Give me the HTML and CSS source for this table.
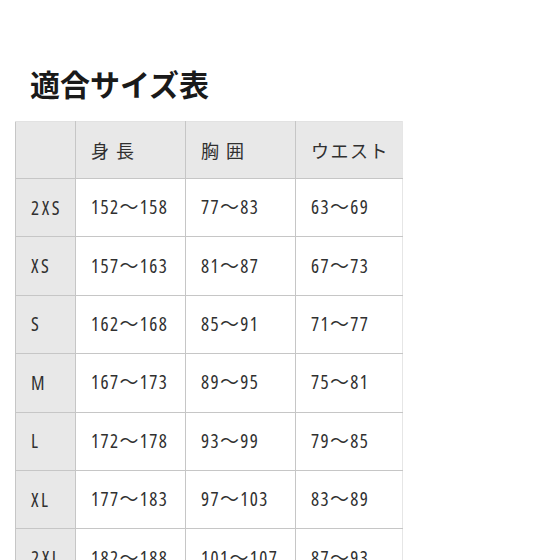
FILE: index.html
```
<!DOCTYPE html>
<html lang="ja">
<head>
<meta charset="utf-8">
<link rel="stylesheet" href="styles.css">
</head>
<body>
<div class="page">
  <h1 class="title">適合サイズ表</h1>
  <table class="size-table">
    <colgroup>
      <col class="c-size">
      <col class="c-val">
      <col class="c-val">
      <col class="c-last">
    </colgroup>
    <thead>
      <tr>
        <th class="corner"></th>
        <th class="head">身 長</th>
        <th class="head">胸 囲</th>
        <th class="head">ウエスト</th>
      </tr>
    </thead>
    <tbody>
      <tr><th class="size">2XS</th><td>152〜158</td><td>77〜83</td><td>63〜69</td></tr>
      <tr><th class="size">XS</th><td>157〜163</td><td>81〜87</td><td>67〜73</td></tr>
      <tr><th class="size">S</th><td>162〜168</td><td>85〜91</td><td>71〜77</td></tr>
      <tr><th class="size">M</th><td>167〜173</td><td>89〜95</td><td>75〜81</td></tr>
      <tr><th class="size">L</th><td>172〜178</td><td>93〜99</td><td>79〜85</td></tr>
      <tr><th class="size">XL</th><td>177〜183</td><td>97〜103</td><td>83〜89</td></tr>
      <tr><th class="size">2XL</th><td>182〜188</td><td>101〜107</td><td>87〜93</td></tr>
    </tbody>
  </table>
</div>
</body>
</html>
```
FILE: styles.css
```
html, body {
  margin: 0;
  padding: 0;
  background: #ffffff;
}
.page {
  width: 560px;
  height: 560px;
  overflow: hidden;
  padding-top: 66px;
  box-sizing: border-box;
}
.title {
  margin: 0 0 21px 30px;
  font-family: "Noto Sans CJK JP", sans-serif;
  font-weight: 700;
  font-size: 30px;
  line-height: 34px;
  color: #1a1a1a;
}
.size-table {
  margin-left: 15px;
  border-collapse: collapse;
  table-layout: fixed;
  width: 387px;
  border-top: 1px solid #e2e2e2;
  border-left: 1px solid #e2e2e2;
}
.c-size { width: 60px; }
.c-val { width: 110px; }
.c-last { width: 107px; }
.size-table th,
.size-table td {
  height: 58.4px;
  padding: 0 0 0 15px;
  text-align: left;
  vertical-align: middle;
  border: 1px solid #c6c6c6;
  color: #303030;
  font-weight: 400;
  box-sizing: border-box;
}
.size-table thead th {
  height: 57px;
  background: #e8e8e8;
  border-top: 1px solid #e2e2e2;
}
.size-table thead th:last-child,
.size-table td:last-child {
  border-right: 1px solid #e6e6e6;
}
.corner {
  border-left: 1px solid #e2e2e2;
}
.head {
  font-family: "Noto Sans CJK JP", sans-serif;
  font-size: 18px;
  letter-spacing: 1.5px;
  padding-bottom: 3px;
}
.size {
  background: #e8e8e8;
  font-family: "Open Sans", "Noto Sans CJK JP", sans-serif;
  font-stretch: 75%;
  font-size: 19px;
  letter-spacing: 2.6px;
}
.size-table td {
  font-family: "Open Sans", "Noto Sans CJK JP", sans-serif;
  font-stretch: 75%;
  font-size: 19px;
  letter-spacing: 1.4px;
  padding-bottom: 3px;
}
```
